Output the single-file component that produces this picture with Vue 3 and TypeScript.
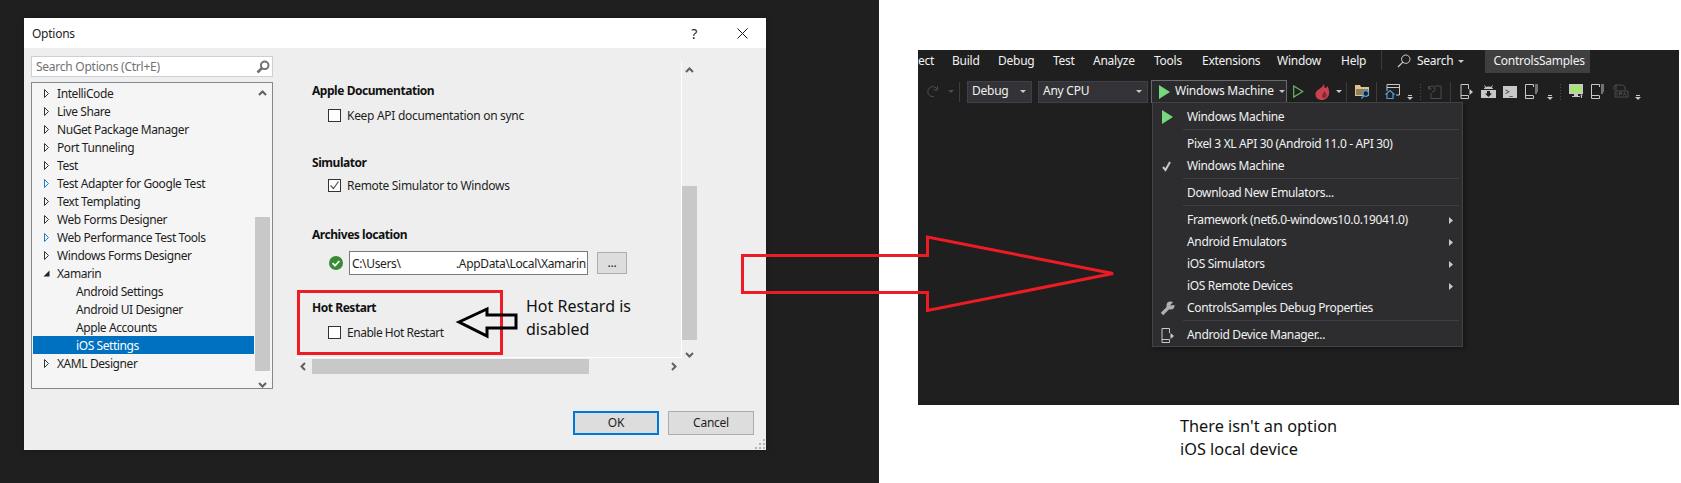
<script setup lang="ts">
type TreeRow = { label: string; arrow?: 'closed' | 'blue' | 'open'; child?: boolean; selected?: boolean }
type MenuRow = { label?: string; sep?: boolean; sub?: boolean; icon?: 'play' | 'check' | 'wrench' | 'device' }

const treeRows: TreeRow[] = [
  { label: 'IntelliCode', arrow: 'closed' },
  { label: 'Live Share', arrow: 'closed' },
  { label: 'NuGet Package Manager', arrow: 'closed' },
  { label: 'Port Tunneling', arrow: 'closed' },
  { label: 'Test', arrow: 'closed' },
  { label: 'Test Adapter for Google Test', arrow: 'blue' },
  { label: 'Text Templating', arrow: 'closed' },
  { label: 'Web Forms Designer', arrow: 'closed' },
  { label: 'Web Performance Test Tools', arrow: 'blue' },
  { label: 'Windows Forms Designer', arrow: 'closed' },
  { label: 'Xamarin', arrow: 'open' },
  { label: 'Android Settings', child: true },
  { label: 'Android UI Designer', child: true },
  { label: 'Apple Accounts', child: true },
  { label: 'iOS Settings', child: true, selected: true },
  { label: 'XAML Designer', arrow: 'closed' },
]

const menuBar = [
  { label: 'ect', width: 34 },
  { label: 'Build', width: 46 },
  { label: 'Debug', width: 55 },
  { label: 'Test', width: 40 },
  { label: 'Analyze', width: 61 },
  { label: 'Tools', width: 48 },
  { label: 'Extensions', width: 75 },
  { label: 'Window', width: 64 },
  { label: 'Help', width: 41 },
]

const menuRows: MenuRow[] = [
  { label: 'Windows Machine', icon: 'play' },
  { sep: true },
  { label: 'Pixel 3 XL API 30 (Android 11.0 - API 30)' },
  { label: 'Windows Machine', icon: 'check' },
  { sep: true },
  { label: 'Download New Emulators...' },
  { sep: true },
  { label: 'Framework (net6.0-windows10.0.19041.0)', sub: true },
  { label: 'Android Emulators', sub: true },
  { label: 'iOS Simulators', sub: true },
  { label: 'iOS Remote Devices', sub: true },
  { label: 'ControlsSamples Debug Properties', icon: 'wrench' },
  { sep: true },
  { label: 'Android Device Manager...', icon: 'device' },
]
</script>

<template>
  <div class="page">
    <div class="left-panel">
      <div class="dialog">
        <div class="titlebar">
          <span class="title">Options</span>
          <span class="help">?</span>
          <svg class="close" width="11" height="11" viewBox="0 0 11 11">
            <path d="M.5.5l10 10M10.5.5l-10 10" stroke="#1a1a1a" fill="none" />
          </svg>
        </div>

        <div class="main">
          <div class="nav">
            <div class="search">
              <span>Search Options (Ctrl+E)</span>
              <svg width="14" height="14" viewBox="0 0 14 14">
                <circle cx="8.7" cy="5.3" r="3.8" fill="none" stroke="#717171" stroke-width="2" />
                <path d="M6 8L1.5 12.5" stroke="#717171" stroke-width="2.6" />
              </svg>
            </div>
            <div class="tree">
              <div class="tree-rows">
                <div
                  v-for="row in treeRows"
                  :key="row.label"
                  class="tree-row"
                  :class="{ child: row.child, selected: row.selected }"
                >
                  <svg v-if="row.arrow === 'open'" class="tree-arrow" width="7" height="9" viewBox="0 0 7 9">
                    <path d="M6.5 1.5v6h-6z" fill="#222" />
                  </svg>
                  <svg v-else-if="row.arrow" class="tree-arrow" width="7" height="9" viewBox="0 0 7 9">
                    <path
                      d="M1.5.5l4 4-4 4z"
                      fill="none"
                      :stroke="row.arrow === 'blue' ? '#1c7cc4' : '#333'"
                    />
                  </svg>
                  <span>{{ row.label }}</span>
                </div>
              </div>
              <div class="tree-scroll">
                <svg class="chev" width="9" height="6" viewBox="0 0 9 6"><path d="M1 5l3.5-3.5L8 5" /></svg>
                <div class="tree-track"><div class="tree-thumb"></div></div>
                <svg class="chev" width="9" height="6" viewBox="0 0 9 6"><path d="M1 1l3.5 3.5L8 1" /></svg>
              </div>
            </div>
          </div>

          <div class="settings">
            <div class="settings-top">
              <div class="content">
                <div class="heading first">Apple Documentation</div>
                <div class="check-row r1"><span class="box"></span>Keep API documentation on sync</div>

                <div class="heading sim">Simulator</div>
                <div class="check-row r2">
                  <span class="box">
                    <svg width="11" height="11" viewBox="0 0 11 11">
                      <path d="M1.5 5.5l3 3 5-7" fill="none" stroke="#555" stroke-width="1.2" />
                    </svg>
                  </span>
                  Remote Simulator to Windows
                </div>

                <div class="heading arch">Archives location</div>
                <div class="archive-row">
                  <svg width="14" height="14" viewBox="0 0 14 14">
                    <circle cx="7" cy="7" r="7" fill="#388a34" />
                    <path d="M3.6 7.2l2.4 2.4 4.4-4.6" fill="none" stroke="#fff" stroke-width="1.8" />
                  </svg>
                  <div class="path-input">
                    <span class="path-start">C:\Users\</span><span>.AppData\Local\Xamarin</span>
                  </div>
                  <div class="dots-btn">...</div>
                </div>

                <div class="heading hot">Hot Restart</div>
                <div class="check-row r1 tight"><span class="box"></span>Enable Hot Restart</div>
              </div>
              <div class="v-scroll">
                <svg class="chev" width="9" height="6" viewBox="0 0 9 6"><path d="M1 5l3.5-3.5L8 5" /></svg>
                <div class="v-track"><div class="v-thumb"></div></div>
                <svg class="chev" width="9" height="6" viewBox="0 0 9 6"><path d="M1 1l3.5 3.5L8 1" /></svg>
              </div>
            </div>
            <div class="h-scroll">
              <svg class="chev" width="6" height="9" viewBox="0 0 6 9"><path d="M5 1L1.5 4.5 5 8" /></svg>
              <div class="h-track"><div class="h-thumb"></div></div>
              <svg class="chev" width="6" height="9" viewBox="0 0 6 9"><path d="M1 1l3.5 3.5L1 8" /></svg>
            </div>
          </div>
        </div>

        <div class="footer">
          <div class="btn ok">OK</div>
          <div class="btn">Cancel</div>
        </div>
        <svg class="grip" width="11" height="11" viewBox="0 0 11 11" fill="#b4b4b4">
          <rect x="8" y="0" width="2" height="2" />
          <rect x="4" y="4" width="2" height="2" />
          <rect x="8" y="4" width="2" height="2" />
          <rect x="0" y="8" width="2" height="2" />
          <rect x="4" y="8" width="2" height="2" />
          <rect x="8" y="8" width="2" height="2" />
        </svg>
      </div>
    </div>

    <div class="right-side">
      <div class="vs">
        <div class="menubar">
          <span v-for="m in menuBar" :key="m.label" class="menu-item" :style="{ width: m.width + 'px' }">{{ m.label }}</span>
          <span class="bar-sep"></span>
          <svg class="search-ico" width="14" height="14" viewBox="0 0 14 14">
            <circle cx="8.8" cy="5.2" r="4.2" fill="none" stroke="#d0d0d0" />
            <path d="M5.8 8.2L1 13" stroke="#d0d0d0" stroke-width="1.2" />
          </svg>
          <span class="search-label">Search</span>
          <span class="caret search-caret"></span>
          <span class="project">ControlsSamples</span>
        </div>

        <div class="toolbar">
          <svg class="redo" width="13" height="13" viewBox="0 0 13 13">
            <path d="M11.5 5A5 5 0 1 0 8 11.5M11.5 1v4h-4" fill="none" stroke="#4d4d4d" />
          </svg>
          <span class="caret dim c1"></span>
          <span class="tb-sep s0"></span>
          <div class="combo debug"><span>Debug</span><span class="caret"></span></div>
          <div class="combo cpu"><span>Any CPU</span><span class="caret"></span></div>
          <div class="run-btn">
            <svg width="12" height="14" viewBox="0 0 12 14"><path d="M0 0l11 7-11 7z" fill="#77d77e" /></svg>
            <span>Windows Machine</span>
            <span class="caret"></span>
          </div>
          <svg class="i-run" width="11" height="13" viewBox="0 0 11 13">
            <path d="M.7.9l9 5.6-9 5.6z" fill="none" stroke="#68b96c" stroke-width="1.2" />
          </svg>
          <svg class="i-fire" width="15" height="16" viewBox="0 0 15 16">
            <path d="M9 0c1 2-.5 3 1 4 1.5 0 2-1 2.5-2 1.5 3 2 6 1.5 8.5C13 14 10 16 6.5 16 3 16 .5 13.5.5 10.5.5 7 3 6 5 4.500 7 3 8 2 9 0z" fill="#c9414f" />
            <path d="M9 7c.5 2-2 3-2 5 0 1 .8 2 2 2 1.5 0 2.500-1.500 2.500-3S10.500 8.500 9 7z" fill="#7d2a33" />
          </svg>
          <span class="caret c2"></span>
          <span class="tb-sep s1"></span>
          <svg class="i-folder" width="15" height="15" viewBox="0 0 15 15">
            <path d="M0 1h5l1 2h8v9H0z" fill="#dcc58c" />
            <path d="M1 5h12v6H1z" fill="#8f7f5c" />
            <circle cx="10.8" cy="9.5" r="2.8" fill="#1f1f1f" stroke="#4a9fe8" stroke-width="1.2" />
            <path d="M8.8 11.5L6.5 14.5" stroke="#4a9fe8" stroke-width="1.4" />
          </svg>
          <span class="tb-sep s2"></span>
          <svg class="i-win" width="15" height="15" viewBox="0 0 15 15">
            <path d="M2 7V.5h12.5V11H11M2 3.5h12.5" fill="none" stroke="#c8c8c8" />
            <path d="M.5 10.5L5 6.5l4.500 4M2 10v4.500h6V10" fill="none" stroke="#4a9fe8" stroke-width="1.2" />
          </svg>
          <span class="caret low c3"></span>
          <span class="dots d1"></span>
          <svg class="i-dimphone" width="14" height="15" viewBox="0 0 14 15">
            <path d="M7 2h6v12.5H3V9M1 5a3 3 0 1 1 3 3M.5 2v3h3" fill="none" stroke="#4d4d4d" />
          </svg>
          <span class="tb-sep s3"></span>
          <svg class="i-device" width="13" height="15" viewBox="0 0 13 15">
            <path d="M8.5 5V.5H1v14h7.5v-3" fill="none" stroke="#c8c8c8" />
            <path d="M1 11.5h7.5" stroke="#c8c8c8" />
            <path d="M9.5 5l3.5 3-3.5 3z" fill="#c8c8c8" />
          </svg>
          <svg class="i-android" width="15" height="15" viewBox="0 0 15 15">
            <path d="M3.5 1.5l1.5 2M11.5 1.5L10 3.5" stroke="#c8c8c8" />
            <path d="M3 5c0-1.5 2-2.5 4.500-2.500S12 3.500 12 5zM0 6h15v8H0z" fill="#c8c8c8" />
            <path d="M6 7h3v2.5h2L7.500 13 4 9.500h2z" fill="#1f1f1f" />
          </svg>
          <div class="i-term"><span>&gt;_</span></div>
          <svg class="i-phone" width="13" height="15" viewBox="0 0 13 15">
            <path d="M8.5 3V.5H.5v14h8V12M.5 11.5h8" fill="none" stroke="#c8c8c8" />
            <path d="M10 1h3M10 3h3M10 5h3M10 7h3M10 9h2" stroke="#c8c8c8" />
          </svg>
          <span class="caret low c4"></span>
          <span class="dots d2"></span>
          <svg class="i-monitor" width="15" height="15" viewBox="0 0 15 15">
            <path d="M0 0h14v10H0z" fill="#c8c8c8" />
            <path d="M1.5 1.5h11v7h-11z" fill="#a6e86e" />
            <path d="M5 10h4v2h2v1H3v-1h2z" fill="#c8c8c8" />
            <path d="M10 10h5v2h-1v2h-3v-2h-1z" fill="#1f1f1f" />
            <path d="M11.5 11h2M12.5 11v3" stroke="#c8c8c8" />
          </svg>
          <svg class="i-phone p2" width="13" height="15" viewBox="0 0 13 15">
            <path d="M8.5 3V.5H.5v14h8V12M.5 11.5h8" fill="none" stroke="#c8c8c8" />
            <path d="M10 1h3M10 3h3M10 5h3M10 7h3M10 9h2" stroke="#c8c8c8" />
          </svg>
          <svg class="i-ipa" width="16" height="16" viewBox="0 0 16 16">
            <path d="M3 6V1h7l2 2v3M3 1a2 2 0 0 0-2 2v3" fill="none" stroke="#4d4d4d" />
            <path d="M2 7h13v6H2z" fill="none" stroke="#4d4d4d" />
            <path d="M4 8.5v3M6.5 11.5v-3h2V10h-2M10.5 11.5l1-3 1 3" fill="none" stroke="#4d4d4d" />
          </svg>
          <span class="caret low c5"></span>
        </div>

        <div class="dropdown">
          <template v-for="(row, i) in menuRows" :key="i">
            <div v-if="row.sep" class="drop-sep"></div>
            <div v-else class="drop-row">
              <span class="drop-icon">
                <svg v-if="row.icon === 'play'" width="11" height="14" viewBox="0 0 11 14"><path d="M0 0l11 7-11 7z" fill="#77d77e" /></svg>
                <svg v-else-if="row.icon === 'check'" width="10" height="11" viewBox="0 0 10 11"><path d="M1 6l2.5 3L8 1" fill="none" stroke="#c8c8c8" stroke-width="2" /></svg>
                <svg v-else-if="row.icon === 'wrench'" width="15" height="15" viewBox="0 0 15 15">
                  <path d="M2 13l7-7" stroke="#b0b0b0" stroke-width="3.2" />
                  <circle cx="10.5" cy="4.5" r="4" fill="#b0b0b0" />
                  <path d="M10 4.5L15-1l1 5z" fill="#2d2d30" />
                </svg>
                <svg v-else-if="row.icon === 'device'" width="13" height="15" viewBox="0 0 13 15">
                  <path d="M8.5 5V.5H1v14h7.5v-3M1 11.5h7.5" fill="none" stroke="#c8c8c8" />
                  <path d="M9.5 5l3.5 3-3.5 3z" fill="#c8c8c8" />
                </svg>
              </span>
              <span class="drop-label">{{ row.label }}</span>
              <svg v-if="row.sub" class="drop-sub" width="4" height="7" viewBox="0 0 4 7"><path d="M0 0l4 3.5L0 7z" fill="#c8c8c8" /></svg>
            </div>
          </template>
        </div>
      </div>

      <p class="note">There isn't an option<br />iOS local device</p>
    </div>

    <div class="callout">Hot Restard is<br />disabled</div>

    <svg class="marks" width="1681" height="483" viewBox="0 0 1681 483" fill="none">
      <rect x="298.5" y="291.5" width="203" height="62" stroke="#ed1c24" stroke-width="3" />
      <path d="M459 322l28-13v6h29v13h-29v8z" stroke="#000" stroke-width="3" />
      <path d="M742.5 255.5H927.5V237L1113 273.5 927.5 310.5V292.5H742.5z" stroke="#ed1c24" stroke-width="3" />
    </svg>
  </div>
</template>

<style>
html,
body {
  margin: 0;
  background: #fff;
}
</style>

<style scoped>
.page {
  position: relative;
  display: flex;
  width: 1681px;
  height: 483px;
  overflow: hidden;
  background: #fff;
  font-family: "Noto Sans", "Open Sans", sans-serif;
  font-size: 12px;
  letter-spacing: -0.25px;
  color: #1e1e1e;
}

.left-panel {
  box-sizing: border-box;
  width: 879px;
  height: 483px;
  padding: 18px 0 0 24px;
  background: #1f1f1f;
}

.dialog {
  position: relative;
  display: flex;
  flex-direction: column;
  width: 742px;
  height: 432px;
  background: #eee;
  box-shadow: 0 0 6px rgba(0, 0, 0, 0.25);
}

.titlebar {
  display: flex;
  align-items: center;
  height: 30px;
  padding: 0 18px 0 8px;
  background: #fff;
}

.title {
  flex: 1;
}

.help {
  margin-right: 40px;
  font-size: 14px;
}

.main {
  display: flex;
  height: 363px;
  padding-left: 7px;
}

.nav {
  width: 242px;
  padding-top: 8px;
}

.search {
  box-sizing: border-box;
  display: flex;
  align-items: center;
  justify-content: space-between;
  height: 21px;
  padding: 0 2px 0 4px;
  background: #fff;
  border: 1px solid #ccceDB;
  color: #717171;
}

.tree {
  box-sizing: border-box;
  display: flex;
  height: 307px;
  margin-top: 5px;
  background: #f5f5f5;
  border: 1px solid #828790;
}

.tree-rows {
  width: 221px;
  margin-left: 1px;
  padding-top: 1px;
}

.tree-row {
  position: relative;
  display: flex;
  align-items: center;
  height: 18px;
  padding-left: 24px;
  letter-spacing: -0.42px;
  white-space: nowrap;
}

.tree-row.child {
  padding-left: 43px;
}

.tree-row.selected {
  background: #0070c0;
  color: #fff;
}

.tree-arrow {
  position: absolute;
  left: 10px;
  top: 5px;
}

.tree-scroll {
  display: flex;
  flex-direction: column;
  align-items: center;
  width: 15px;
  margin-left: 1px;
}

.chev {
  flex: none;
  fill: none;
  stroke: #606060;
  stroke-width: 2;
}

.tree-scroll .chev:first-child {
  margin: 7px 0 0;
}

.tree-scroll .chev:last-child {
  margin: 6px 0 0;
}

.tree-track {
  position: relative;
  width: 15px;
  height: 280px;
}

.tree-thumb {
  position: absolute;
  left: 0;
  top: 121px;
  width: 15px;
  height: 154px;
  background: #c8c8c8;
}

.settings {
  width: 402px;
  margin-left: 22px;
  padding-top: 13px;
}

.settings-top {
  display: flex;
  height: 297px;
}

.content {
  box-sizing: border-box;
  width: 387px;
  height: 297px;
  padding: 22px 0 0 17px;
  border-right: 1px solid #fff;
  border-bottom: 1px solid #fff;
  white-space: nowrap;
}

.heading {
  height: 16px;
  line-height: 16px;
  font-weight: 700;
  letter-spacing: -0.45px;
  color: #111;
}

.heading.sim {
  margin-top: 32px;
}

.heading.arch {
  margin-top: 34px;
}

.heading.hot {
  margin-top: 25px;
}

.check-row {
  display: flex;
  align-items: center;
  gap: 6px;
  height: 15px;
  margin-left: 16px;
  letter-spacing: -0.3px;
}

.check-row.tight {
  letter-spacing: -0.48px;
}

.check-row.r1 {
  margin-top: 9px;
}

.check-row.r2 {
  margin-top: 7px;
}

.box {
  box-sizing: border-box;
  display: flex;
  align-items: center;
  justify-content: center;
  width: 13px;
  height: 13px;
  background: #fff;
  border: 1px solid #333;
}

.archive-row {
  display: flex;
  align-items: center;
  height: 24px;
  margin: 8px 0 0 17px;
}

.path-input {
  box-sizing: border-box;
  display: flex;
  align-items: center;
  width: 239px;
  height: 24px;
  margin-left: 6px;
  padding-left: 2px;
  background: #fff;
  border: 1px solid #7a7a7a;
  letter-spacing: -0.35px;
}

.path-start {
  width: 104px;
}

.dots-btn {
  box-sizing: border-box;
  width: 30px;
  height: 22px;
  margin-left: 9px;
  background: #ddd;
  border: 1px solid #adadad;
  text-align: center;
  line-height: 20px;
}

.v-scroll {
  display: flex;
  flex-direction: column;
  align-items: center;
  width: 15px;
}

.v-scroll .chev:first-child {
  margin-top: 6px;
}

.v-scroll .chev:last-child {
  margin-top: 6px;
}

.v-track {
  position: relative;
  width: 15px;
  height: 273px;
}

.v-thumb {
  position: absolute;
  left: 0;
  top: 113px;
  width: 15px;
  height: 154px;
  background: #c8c8c8;
}

.h-scroll {
  display: flex;
  align-items: center;
  width: 387px;
  height: 15px;
  margin-top: 1px;
}

.h-track {
  position: relative;
  flex: 1;
  height: 15px;
}

.h-scroll .chev:first-child {
  margin-left: 5px;
}

.h-scroll .chev:last-child {
  margin-right: 5px;
}

.h-thumb {
  position: absolute;
  left: 6px;
  top: 0;
  width: 277px;
  height: 15px;
  background: #c8c8c8;
}

.footer {
  display: flex;
  justify-content: flex-end;
  gap: 9px;
  padding-right: 12px;
}

.btn {
  box-sizing: border-box;
  width: 86px;
  height: 24px;
  background: #ddd;
  border: 1px solid #adadad;
  text-align: center;
  line-height: 22px;
}

.btn.ok {
  border: 2px solid #0078d7;
  line-height: 20px;
}

.grip {
  position: absolute;
  right: 0;
  bottom: 0;
}

.right-side {
  width: 761px;
  margin-left: 39px;
  padding-top: 50px;
}

.vs {
  position: relative;
  box-sizing: border-box;
  height: 355px;
  background: #1f1f1f;
  color: #f1f1f1;
}

.menubar {
  display: flex;
  align-items: flex-start;
  height: 30px;
  line-height: 22px;
}

.menu-item {
  flex: none;
  white-space: nowrap;
}

.bar-sep {
  width: 1px;
  height: 20px;
  margin-left: -1px;
  background: #3c3c3c;
}

.search-ico {
  margin: 4px 0 0 15px;
}

.search-label {
  margin-left: 6px;
}

.search-caret {
  margin: 10px 0 0 5px;
}

.project {
  box-sizing: border-box;
  width: 105px;
  height: 23px;
  margin-left: 21px;
  padding-left: 8px;
  background: #3f3f3f;
}

.caret {
  flex: none;
  display: inline-block;
  width: 0;
  height: 0;
  border-left: 3.5px solid transparent;
  border-right: 3.5px solid transparent;
  border-top: 3.5px solid #c8c8c8;
}

.caret.dim {
  border-top-color: #4d4d4d;
}

.caret.low {
  position: relative;
  top: 7px;
  box-shadow: 0 -3px 0 -1px #c8c8c8;
}

.toolbar {
  position: relative;
  display: flex;
  align-items: center;
  height: 23px;
}

.toolbar > * {
  flex: none;
}

.redo {
  margin-left: 8px;
}

.c1 {
  margin-left: 9px;
}

.tb-sep {
  width: 1px;
  height: 20px;
  background: #3c3c3c;
}

.s0 {
  margin-left: 5px;
}

.combo {
  box-sizing: border-box;
  display: flex;
  align-items: center;
  justify-content: space-between;
  height: 22px;
  padding: 0 5px 0 4px;
  background: #333337;
  border: 1px solid #3f3f46;
}

.combo span:first-child {
  padding-bottom: 2px;
}

.debug {
  width: 65px;
  margin-left: 7px;
}

.cpu {
  width: 110px;
  margin-left: 6px;
}

.run-btn {
  box-sizing: border-box;
  display: flex;
  align-items: center;
  width: 136px;
  height: 23px;
  margin-left: 3px;
  padding-left: 7px;
  background: #2a2a2c;
  border: 1px solid #6a6a6a;
}

.run-btn span:first-of-type {
  margin-left: 4px;
  padding-bottom: 2px;
  white-space: nowrap;
}

.run-btn .caret {
  margin-left: auto;
  margin-right: 1px;
}

.i-run {
  margin-left: 6px;
}

.i-fire {
  margin-left: 11px;
}

.c2 {
  margin-left: 6px;
}

.s1 {
  margin-left: 4px;
}

.i-folder {
  margin-left: 8px;
}

.s2 {
  margin-left: 6px;
}

.i-win {
  margin-left: 8px;
}

.c3 {
  margin-left: 7px;
}

.dots {
  width: 3px;
  height: 18px;
  background: radial-gradient(circle, #4d4d4d 0.7px, transparent 0.8px) 0 0 / 3px 3px;
}

.d1 {
  margin-left: 6px;
}

.i-dimphone {
  margin-left: 6px;
}

.s3 {
  margin-left: 8px;
}

.i-device {
  margin-left: 9px;
}

.i-android {
  margin-left: 8px;
}

.i-term {
  box-sizing: border-box;
  width: 14px;
  height: 12px;
  margin-left: 7px;
  background: #c8c8c8;
  color: #1f1f1f;
  font-size: 8px;
  line-height: 12px;
  padding-left: 2px;
  overflow: hidden;
}

.i-phone {
  margin-left: 8px;
}

.c4 {
  margin-left: 9px;
}

.d2 {
  margin-left: 6px;
}

.i-monitor {
  margin-left: 7px;
}

.p2 {
  margin-left: 7px;
}

.i-ipa {
  margin-left: 9px;
}

.c5 {
  margin-left: 6px;
}

.dropdown {
  position: absolute;
  left: 234px;
  top: 52px;
  box-sizing: border-box;
  width: 311px;
  height: 245px;
  padding-top: 3px;
  background: #2d2d30;
  border: 1px solid #434346;
  box-shadow: 2px 2px 4px rgba(0, 0, 0, 0.35);
}

.drop-row {
  position: relative;
  display: flex;
  align-items: center;
  height: 22px;
  white-space: nowrap;
}

.drop-icon {
  display: flex;
  align-items: center;
  justify-content: center;
  width: 28px;
}

.drop-label {
  margin-left: 6px;
  padding-bottom: 2px;
  letter-spacing: -0.35px;
}

.drop-sub {
  position: absolute;
  left: 296px;
  top: 8px;
}

.drop-sep {
  height: 1px;
  margin: 1px 3px 3px 30px;
  background: #3f3f46;
}

.note {
  margin: 10px 0 0 262px;
  font-size: 16.3px;
  letter-spacing: 0;
  line-height: 23px;
  color: #111;
}

.callout {
  position: absolute;
  left: 526px;
  top: 295px;
  font-size: 16px;
  letter-spacing: 0;
  line-height: 23px;
  color: #111;
}

.marks {
  position: absolute;
  left: 0;
  top: 0;
  pointer-events: none;
}
</style>
